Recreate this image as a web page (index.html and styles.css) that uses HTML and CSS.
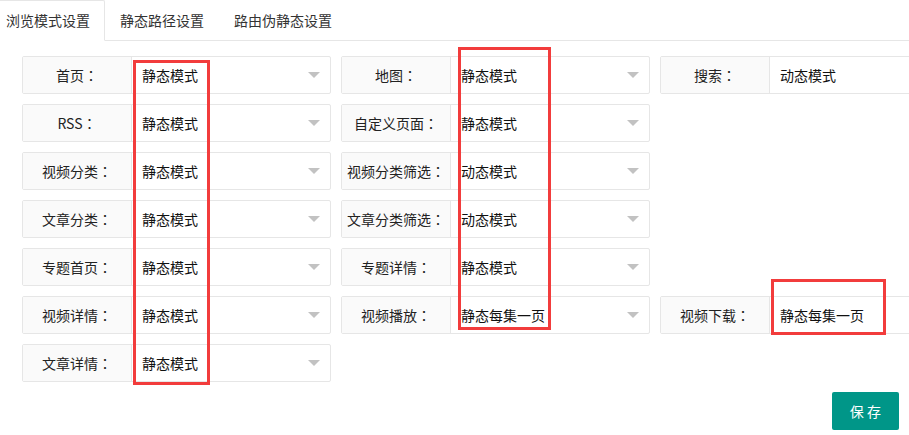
FILE: index.html
```html
<!DOCTYPE html>
<html lang="zh-CN">
<head>
<meta charset="utf-8">
<title>伪静态设置</title>
<link rel="stylesheet" href="styles.css">
</head>
<body>
<div class="page">
  <ul class="tabs">
    <li class="tab active">浏览模式设置</li>
    <li class="tab">静态路径设置</li>
    <li class="tab">路由伪静态设置</li>
  </ul>
  <form class="form">
    <div class="row">
      <div class="field"><label class="label">首页<span class="colon" lang="zh-TW">：</span></label><div class="select"><span>静态模式</span><i class="edge"></i></div></div>
      <div class="field"><label class="label">地图<span class="colon" lang="zh-TW">：</span></label><div class="select"><span>静态模式</span><i class="edge"></i></div></div>
      <div class="field"><label class="label">搜索<span class="colon" lang="zh-TW">：</span></label><div class="select"><span>动态模式</span><i class="edge"></i></div></div>
    </div>
    <div class="row">
      <div class="field"><label class="label">RSS<span class="colon" lang="zh-TW">：</span></label><div class="select"><span>静态模式</span><i class="edge"></i></div></div>
      <div class="field"><label class="label">自定义页面<span class="colon" lang="zh-TW">：</span></label><div class="select"><span>静态模式</span><i class="edge"></i></div></div>
    </div>
    <div class="row">
      <div class="field"><label class="label">视频分类<span class="colon" lang="zh-TW">：</span></label><div class="select"><span>静态模式</span><i class="edge"></i></div></div>
      <div class="field"><label class="label">视频分类筛选<span class="colon" lang="zh-TW">：</span></label><div class="select"><span>动态模式</span><i class="edge"></i></div></div>
    </div>
    <div class="row">
      <div class="field"><label class="label">文章分类<span class="colon" lang="zh-TW">：</span></label><div class="select"><span>静态模式</span><i class="edge"></i></div></div>
      <div class="field"><label class="label">文章分类筛选<span class="colon" lang="zh-TW">：</span></label><div class="select"><span>动态模式</span><i class="edge"></i></div></div>
    </div>
    <div class="row">
      <div class="field"><label class="label">专题首页<span class="colon" lang="zh-TW">：</span></label><div class="select"><span>静态模式</span><i class="edge"></i></div></div>
      <div class="field"><label class="label">专题详情<span class="colon" lang="zh-TW">：</span></label><div class="select"><span>静态模式</span><i class="edge"></i></div></div>
    </div>
    <div class="row">
      <div class="field"><label class="label">视频详情<span class="colon" lang="zh-TW">：</span></label><div class="select"><span>静态模式</span><i class="edge"></i></div></div>
      <div class="field"><label class="label">视频播放<span class="colon" lang="zh-TW">：</span></label><div class="select"><span>静态每集一页</span><i class="edge"></i></div></div>
      <div class="field"><label class="label">视频下载<span class="colon" lang="zh-TW">：</span></label><div class="select"><span>静态每集一页</span><i class="edge"></i></div></div>
    </div>
    <div class="row">
      <div class="field"><label class="label">文章详情<span class="colon" lang="zh-TW">：</span></label><div class="select"><span>静态模式</span><i class="edge"></i></div></div>
    </div>
    <div class="actions">
      <button type="button" class="btn">保 存</button>
    </div>
  </form>
  <div class="mark mark1"></div>
  <div class="mark mark2"></div>
  <div class="mark mark3"></div>
</div>
</body>
</html>
```

FILE: styles.css
```css
* { box-sizing: border-box; }
html, body {
  margin: 0;
  padding: 0;
  background: #fff;
  overflow: hidden;
}
body {
  font-family: "Noto Sans CJK SC", "Noto Sans", "Liberation Sans", sans-serif;
  font-size: 14px;
  color: #333;
}
.page {
  position: relative;
  width: 909px;
  height: 435px;
  overflow: hidden;
}
.tabs {
  list-style: none;
  margin: 0 0 0 -9px;
  padding: 0;
  display: flex;
  height: 41px;
  border-bottom: 1px solid #e6e6e6;
}
.tab {
  height: 40px;
  line-height: 40px;
  padding: 0 15px;
  color: #333;
  white-space: nowrap;
}
.active {
  height: 41px;
  border: 1px solid #e6e6e6;
  border-bottom-color: #fff;
  border-radius: 2px 2px 0 0;
  background: #fff;
  line-height: 38px;
  padding: 0 14px;
}
.form {
  margin: 0;
  padding: 15px 0 0 22px;
  display: flex;
  flex-direction: column;
  gap: 10px;
}
.row {
  display: flex;
  gap: 10px;
  height: 38px;
}
.field {
  flex: 0 0 309px;
  width: 309px;
  height: 38px;
  display: flex;
  border: 1px solid #e6e6e6;
  border-radius: 2px;
  background: #fff;
}
.label {
  flex: 0 0 109px;
  background: #fafafa;
  border-right: 1px solid #e6e6e6;
  text-align: center;
  line-height: 36px;
  white-space: nowrap;
  color: #222;
}
.colon {
  font-family: "Noto Sans CJK TC", "Noto Sans CJK SC", sans-serif;
}
.select {
  position: relative;
  flex: 1;
  padding-left: 10px;
  line-height: 36px;
  color: #111;
  white-space: nowrap;
}
.edge {
  position: absolute;
  right: 10px;
  top: 50%;
  margin-top: -3px;
  width: 0;
  height: 0;
  border-style: solid;
  border-width: 6px 6px 0 6px;
  border-color: #c2c2c2 transparent transparent transparent;
}
.actions {
  display: flex;
  justify-content: flex-end;
  padding-right: 10px;
}
.btn {
  height: 38px;
  line-height: 38px;
  padding: 0 18px;
  border: 0;
  border-radius: 2px;
  background: #009688;
  color: #fff;
  font-family: inherit;
  font-size: 14px;
  white-space: nowrap;
}
.mark {
  position: absolute;
  border: 3px solid #f23c3c;
  pointer-events: none;
}
.mark1 { left: 133px; top: 60px; width: 77px; height: 325px; }
.mark2 { left: 458px; top: 47px; width: 93px; height: 283px; }
.mark3 { left: 771px; top: 279px; width: 115px; height: 56px; }
```
